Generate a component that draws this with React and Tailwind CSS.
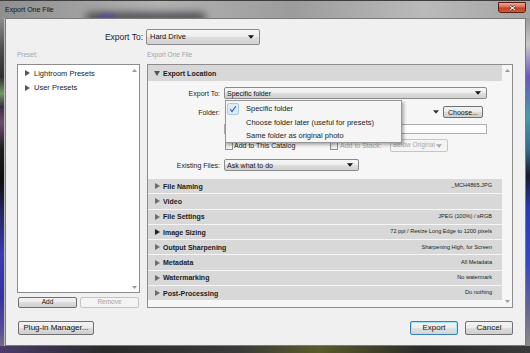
import React from 'react';

const sections = [
  ['File Naming', '_MCH4865.JPG'],
  ['Video', ''],
  ['File Settings', 'JPEG (100%) / sRGB'],
  ['Image Sizing', '72 ppi / Resize Long Edge to 1200 pixels'],
  ['Output Sharpening', 'Sharpening High, for Screen'],
  ['Metadata', 'All Metadata'],
  ['Watermarking', 'No watermark'],
  ['Post-Processing', 'Do nothing'],
];

const menuItems = ['Specific folder', 'Choose folder later (useful for presets)', 'Same folder as original photo'];

const Caret = ({ className = '' }) => (
  <svg viewBox="0 0 7 4" className={`h-[4px] w-[6px] shrink-0 ${className}`}>
    <path d="M0 0h7L3.5 4z" fill="currentColor" />
  </svg>
);

const TriRight = ({ className = '' }) => (
  <svg viewBox="0 0 5 6" className={`h-[6px] w-[5px] shrink-0 ${className}`}>
    <path d="M0 0l5 3-5 3z" fill="currentColor" />
  </svg>
);

const TriDown = ({ className = '' }) => (
  <svg viewBox="0 0 6 5" className={`h-[5px] w-[6px] shrink-0 ${className}`}>
    <path d="M0 0h6L3 5z" fill="currentColor" />
  </svg>
);

const ScrollArrow = ({ up }) => (
  <svg viewBox="0 0 5 3" className="h-[3px] w-[5px] text-[#9a9a9a]">
    <path d={up ? 'M0 3h5L2.5 0z' : 'M0 0h5L2.5 3z'} fill="currentColor" />
  </svg>
);

function Combo({ text, className = '', disabled = false, textClass = 'text-[7px]' }) {
  return (
    <div
      className={`flex items-center justify-between rounded-[2px] border pl-[2px] pr-[5px] ${
        disabled
          ? 'border-[#c6c6c6] bg-[#f4f4f4] text-[#a8a8a8]'
          : 'border-[#8a8a8a] bg-[linear-gradient(to_bottom,#f7f7f7,#ececec_50%,#dedede_50%,#d2d2d2)] text-[#111]'
      } ${className}`}
    >
      <span className={`${textClass} whitespace-nowrap leading-none`}>{text}</span>
      <Caret />
    </div>
  );
}

function Btn({ children, className = '', disabled = false, focus = false, textClass = 'text-[8px]' }) {
  const look = disabled
    ? 'border-[#c2c5c8] bg-[#f4f4f4] text-[#a3a3a3]'
    : focus
    ? 'border-[#3c7fb1] bg-[linear-gradient(to_bottom,#f4f4f4,#ececec_50%,#e0e0e0_50%,#d6d6d6)] text-[#111] shadow-[inset_0_0_0_1px_#a6e2fb]'
    : 'border-[#707070] bg-[linear-gradient(to_bottom,#f2f2f2,#ebebeb_50%,#dddddd_50%,#cfcfcf)] text-[#111]';
  return (
    <div className={`flex items-center justify-center rounded-[2px] border ${look} ${className}`}>
      <span className={`${textClass} whitespace-nowrap leading-none`}>{children}</span>
    </div>
  );
}

const Checkbox = () => (
  <div className="h-[8px] w-[8px] shrink-0 border border-[#8e8f8f] bg-[linear-gradient(to_bottom_right,#dcdcdc,#fbfbfb)]" />
);

function RightPanel() {
  return (
    <div className="relative flex h-[244px] w-[366px] border border-[#8c8c8c] bg-[#f6f6f6]">
      <div className="flex w-[354px] flex-col">
        {/* Export Location */}
        <div className="flex h-[16px] items-center bg-[#d8d8d8] pl-[6px]">
          <TriDown className="text-[#555]" />
          <span className="ml-[3px] text-[7px] font-bold leading-none">Export Location</span>
        </div>
        <div className="flex flex-col pb-[7px] text-[7px] leading-none">
          <div className="mt-[6px] flex h-[12px] items-center">
            <div className="w-[72px] text-right">Export To:</div>
            <Combo text="Specific folder" className="ml-[4px] h-[12px] w-[263px]" />
          </div>
          <div className="mt-[7px] flex h-[12px] items-center">
            <div className="w-[72px] text-right">Folder:</div>
            <Caret className="ml-[213px] text-[#333]" />
            <Btn className="ml-[4px] h-[12px] w-[40px]" textClass="text-[7px]">Choose...</Btn>
          </div>
          <div className="ml-[76px] mt-[6px] h-[10px] w-[263px] border border-[#abadb3] bg-white" />
          <div className="mt-[5px] flex h-[13px] items-center">
            <div className="ml-[77px] flex w-[105px] items-center">
              <Checkbox />
              <span className="ml-[1px] whitespace-nowrap">Add to This Catalog</span>
            </div>
            <Checkbox />
            <span className="ml-[2px] w-[50px] whitespace-nowrap text-[#a8a8a8]">Add to Stack:</span>
            <Combo disabled text="Below Original" className="h-[13px] w-[58px]" textClass="text-[6.5px]" />
          </div>
          <div className="mt-[7px] flex h-[12px] items-center">
            <div className="w-[72px] text-right">Existing Files:</div>
            <Combo text="Ask what to do" className="ml-[4px] h-[12px] w-[135px]" />
          </div>
        </div>
        <div className="mt-px flex flex-col gap-px">
          {sections.map(([title, value]) => (
            <div key={title} className="flex h-[14.3px] items-center bg-[#d8d8d8] pl-[7px] pr-[10px]">
              <TriRight className={title === 'Image Sizing' ? 'text-[#222]' : 'text-[#6c6c6c]'} />
              <span className="ml-[3px] text-[7px] font-bold leading-none">{title}</span>
              <span className="ml-auto text-[5.6px] leading-none">{value}</span>
            </div>
          ))}
        </div>
      </div>
      <div className="flex flex-1 flex-col items-center justify-between pb-[4px] pt-[4px]">
        <ScrollArrow up />
        <ScrollArrow />
      </div>

      {/* open popup menu */}
      <div className="absolute left-[77px] top-[35px] h-[43px] w-[177px] border border-[#979797] bg-[#f5f5f5] pt-[1px] shadow-[2px_2px_3px_rgba(0,0,0,0.3)]">
        {menuItems.map((item, i) => (
          <div key={item} className="flex h-[13.5px] items-center">
            <div
              className={`ml-[1px] flex h-[12px] w-[12px] items-center justify-center rounded-[2px] ${
                i === 0 ? 'border border-[#a8c8ec] bg-[#dfeaf7]' : ''
              }`}
            >
              {i === 0 && (
                <svg viewBox="0 0 10 10" className="h-[8px] w-[8px]">
                  <path d="M1.5 5.2L3.8 8.2L8.5 1.5" fill="none" stroke="#2b5cb5" strokeWidth="1.4" />
                </svg>
              )}
            </div>
            <span className="ml-[7px] text-[7.5px] leading-none text-[#1b1b1b]">{item}</span>
          </div>
        ))}
      </div>
    </div>
  );
}

export default function App() {
  return (
    <div className="relative flex h-[353px] w-[530px] flex-col overflow-hidden bg-[#a9a9a9] font-['Liberation_Sans',Arial,sans-serif] text-[#1b1b1b]">
      {/* glass title bar */}
      <div className="relative flex h-[18px] shrink-0 items-start overflow-hidden border-t border-[#3d3d3d] bg-[linear-gradient(to_right,#8f8f8f,#b2b2b2_30%,#9c9c9c_55%,#bababa_80%,#a4a4a4)]">
        <div className="absolute left-[86px] top-[12px] h-[9px] w-[120px] rounded-full bg-[#15151f] opacity-70 blur-[4px]" />
        <div className="absolute left-[100px] top-[13px] h-[5px] w-[14px] rounded-full bg-[#5a3cc8] opacity-70 blur-[2px]" />
        <span className="relative ml-[5px] mt-[5px] text-[7px] leading-none text-[#111]">Export One File</span>
        <div className="relative ml-auto mr-[4px] mt-[1px] flex h-[11px] w-[28px] items-center justify-center rounded-b-[3px] border border-[#5b1c12] bg-[linear-gradient(to_bottom,#eaa898,#d66a50_45%,#c23b20_55%,#d9593b)]">
          <svg viewBox="0 0 8 7" className="h-[6px] w-[7px]">
            <path d="M1 1L7 6M7 1L1 6" stroke="#4a1a10" strokeWidth="2.6" />
            <path d="M1 1L7 6M7 1L1 6" stroke="#fff" strokeWidth="1.4" />
          </svg>
        </div>
      </div>

      <div className="flex h-[328px] shrink-0">
        <div className="w-[5px] border-r border-[#bdbdbd] bg-[linear-gradient(to_bottom,#8d8d8d_0%,#4b4b4b_10%,#2f2f2f_18%,#6f9a63_23%,#3a3040_27%,#6e4a70_32%,#1c1c1c_40%,#0f0f0f_50%,#23235a_58%,#3b3cb0_72%,#3434a0_85%,#5a4a9a_95%,#7a6a8a_100%)]" />

        <div className="flex w-[521px] flex-col border border-[#7a7a7a] bg-[#f0f0f0]">
          <div className="mt-[10px] flex h-[16px] items-center">
            <div className="w-[140px] pr-[3px] text-right text-[8.5px] leading-none">Export To:</div>
            <Combo text="Hard Drive" className="h-[16px] w-[114px]" textClass="text-[7.5px] pl-[1px]" />
          </div>

          <div className="flex h-[19px] items-center pt-[2px] text-[6.5px] leading-none text-[#a3a3a3]">
            <span className="ml-[11px] w-[130px]">Preset:</span>
            <span>Export One File</span>
          </div>

          <div className="ml-[11px] flex items-start gap-[7px]">
            <div className="flex w-[123px] flex-col">
              <div className="flex h-[229px] border border-[#8c8c8c] bg-white">
                <div className="flex-1 pl-[7px] pt-[1px]">
                  {['Lightroom Presets', 'User Presets'].map((p) => (
                    <div key={p} className="flex h-[14.5px] items-center">
                      <TriRight className="text-[#555]" />
                      <span className="ml-[4px] text-[7.5px] leading-none">{p}</span>
                    </div>
                  ))}
                </div>
                <div className="flex w-[9px] flex-col items-center justify-between pb-[3px] pt-[4px]">
                  <ScrollArrow up />
                  <ScrollArrow />
                </div>
              </div>
              <div className="mt-[4px] flex h-[11px] gap-[3px] px-[1px]">
                <Btn className="flex-1" textClass="text-[6.5px]">Add</Btn>
                <Btn disabled className="flex-1" textClass="text-[6.5px]">Remove</Btn>
              </div>
            </div>
            <RightPanel />
          </div>

          <div className="mt-[13px] flex h-[14px] items-center">
            <Btn className="ml-[12px] h-[14px] w-[76px]">Plug-in Manager...</Btn>
            <Btn focus className="ml-auto h-[14px] w-[48px]">Export</Btn>
            <Btn className="ml-[7px] mr-[12px] h-[14px] w-[48px]">Cancel</Btn>
          </div>
        </div>

        <div className="flex-1 bg-[linear-gradient(to_bottom,#9a9a9a_0%,#c9c9c9_8%,#6a58b8_18%,#4a9aa8_30%,#3a6a8a_40%,#1a1a2a_48%,#2a3ab0_58%,#3a48c0_75%,#6a6a8a_90%,#8a8a8a_100%)]" />
      </div>

      <div className="flex-1 bg-[linear-gradient(to_right,#4a3a6a,#2a2a2a_20%,#3a3a3a_45%,#5a5a2a_60%,#2a2a2a_80%,#3a3a3a)]" />
    </div>
  );
}
